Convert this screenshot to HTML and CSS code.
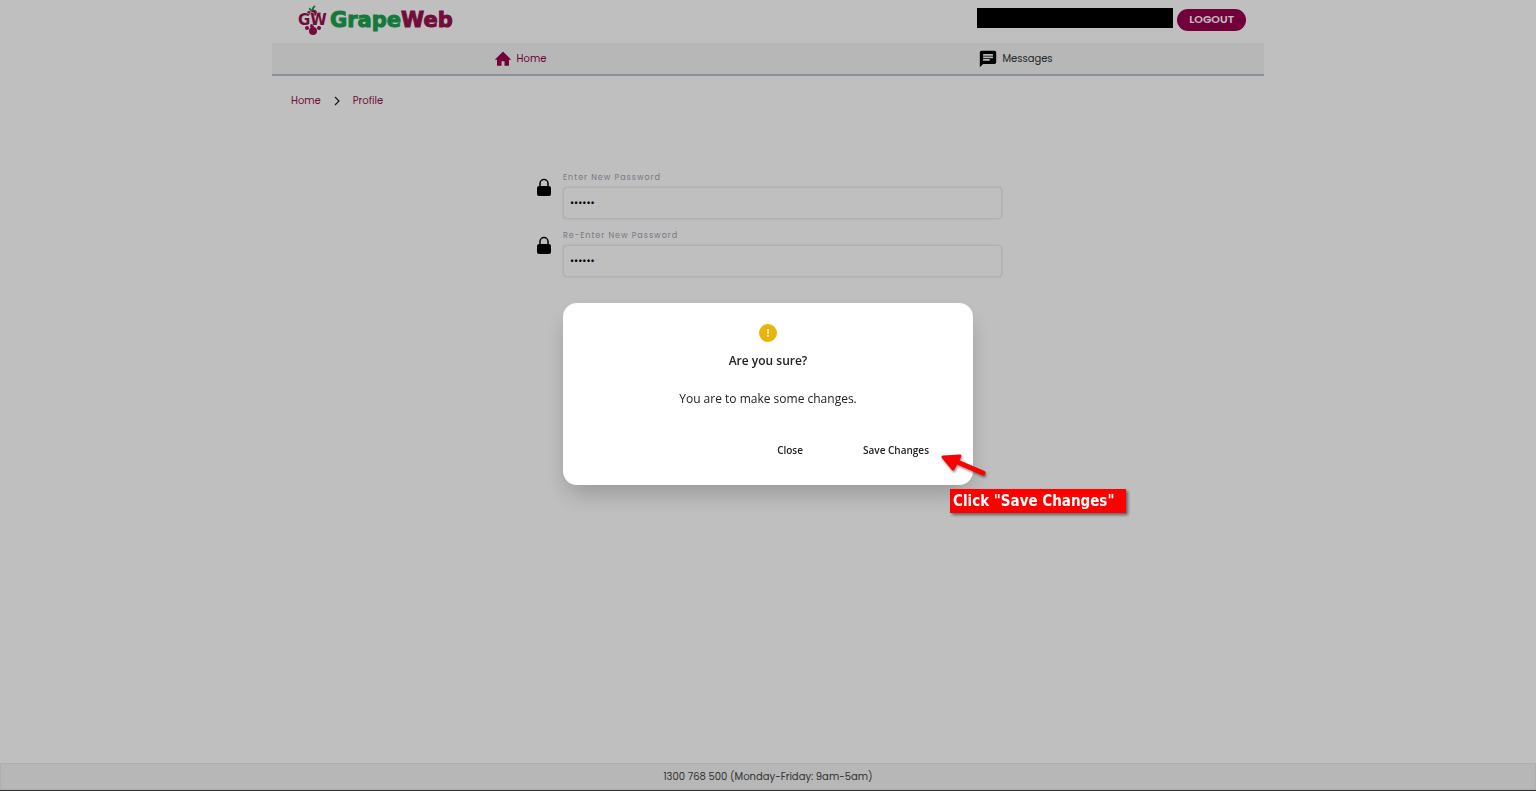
FILE: index.html
```
<!DOCTYPE html>
<html lang="en">
<head>
    <meta charset="UTF-8">
    <meta name="viewport" content="width=device-width, initial-scale=1.0">
    <title>GrapeWeb - Profile</title>
    <link rel="stylesheet" href="styles.css">
</head>
<body>
    <div class="page">
        <div class="container">
            <header class="header">
                <a href="#" class="logo">
                    <svg class="logo-mark" viewBox="0 0 30 32" width="30" height="32">
                        <path d="M15 7 Q14 4 17 2 M15 7 Q11 6 12 4" fill="none" stroke="#1aa350" stroke-width="2"/>
                        <g fill="#98104e">
                            <circle cx="16" cy="9" r="3"/>
                            <circle cx="11" cy="9" r="2"/>
                            <circle cx="21" cy="10" r="2"/>
                            <circle cx="9" cy="24" r="2"/>
                            <circle cx="14" cy="22" r="2"/>
                            <circle cx="21" cy="24" r="2"/>
                            <circle cx="15" cy="27" r="4"/>
                            <text x="0" y="21" class="logo-initials">GW</text>
                        </g>
                    </svg>
                    <span class="logo-text">Grape<span class="logo-web">Web</span></span>
                </a>
                <div class="account">
                    <div class="account-name"></div>
                    <button type="button" class="btn-logout">LOGOUT</button>
                </div>
            </header>

            <!-- Main navigation -->
            <nav class="nav">
                <a href="#" class="nav-link active">
                    <svg viewBox="0 0 24 24" width="18" height="18" fill="currentColor"><path d="M10 21v-6h4v6h6v-8h3L12 2 1 13h3v8z"/></svg>
                    Home
                </a>
                <a href="#" class="nav-link">
                    <svg viewBox="1 1 22 22" width="18" height="18"><path fill="#000" d="M20 2H4c-1.100 0-2 .9-2 2v18l4-4h14c1.100 0 2-.9 2-2V4c0-1.100-.9-2-2-2zM6 9h12v2H6V9zm8 5H6v-2h8v2zm4-6H6V6h12v2z"/></svg>
                    Messages
                </a>
            </nav>

            <div class="breadcrumb">
                <a href="#">Home</a>
                <svg viewBox="0 0 8 10" width="8" height="10"><path d="M2 1l4 4-4 4" fill="none" stroke="#222" stroke-width="1.200"/></svg>
                <a href="#">Profile</a>
            </div>

            <form class="password-form">
                <div class="form-row">
                    <svg viewBox="0 0 20 20" width="20" height="20"><path d="M6 9V5.500a4 4 0 0 1 8 0V9" fill="none" stroke="#000" stroke-width="1.500"/><rect x="3" y="8" width="14" height="10" rx="2"/></svg>
                    <div class="form-group">
                        <label for="new-password">Enter New Password</label>
                        <input type="password" id="new-password" value="secret">
                    </div>
                </div>
                <div class="form-row">
                    <svg viewBox="0 0 20 20" width="20" height="20"><path d="M6 9V5.500a4 4 0 0 1 8 0V9" fill="none" stroke="#000" stroke-width="1.500"/><rect x="3" y="8" width="14" height="10" rx="2"/></svg>
                    <div class="form-group">
                        <label for="confirm-password">Re-Enter New Password</label>
                        <input type="password" id="confirm-password" value="secret">
                    </div>
                </div>
            </form>
        </div>

        <footer class="footer">1300 768 500 (Monday-Friday: 9am-5am)</footer>
    </div>

    <!-- Confirm dialog -->
    <div class="overlay">
        <div class="modal" role="dialog" aria-modal="true" aria-labelledby="modal-title">
            <svg class="modal-icon" viewBox="0 0 20 20" width="20" height="20">
                <circle cx="10" cy="10" r="9" fill="#eab308"/>
                <path d="M10 6v5M10 12v2" stroke="#fff" stroke-width="1.400"/>
            </svg>
            <h3 class="modal-title" id="modal-title">Are you sure?</h3>
            <p class="modal-text">You are to make some changes.</p>
            <div class="modal-actions">
                <button type="button" class="btn-modal">Close</button>
                <button type="button" class="btn-modal">Save Changes</button>
            </div>

            <div class="callout">
                <svg class="callout-arrow" viewBox="0 0 50 28" width="50" height="28">
                    <path d="M2 3 L19 2 L12 15 Z" fill="#f00" stroke="#f00" stroke-width="3" stroke-linejoin="round"/>
                    <path d="M14 7 L42 19" stroke="#f00" stroke-width="5" stroke-linecap="round"/>
                </svg>
                <div class="callout-text">Click "Save Changes"</div>
            </div>
        </div>
    </div>
</body>
</html>
```
FILE: styles.css
```
* {
    box-sizing: border-box;
}

body {
    margin: 0;
    font-family: Poppins, Inter, sans-serif;
    font-size: 10px;
    color: #444;
    background-color: #fff;
}

a {
    color: #98104e;
    text-decoration: none;
}

button {
    font-family: inherit;
    border: none;
    cursor: pointer;
}

.page {
    display: flex;
    flex-direction: column;
    min-height: 100vh;
    border-bottom: 1px solid #444;
}

.container {
    flex: 1;
    width: 100%;
    max-width: 992px;
    margin: 0 auto;
}

/* Header */
.header {
    display: flex;
    justify-content: space-between;
    align-items: center;
    height: 43px;
    padding: 0 18px 4px 26px;
}

.logo {
    display: flex;
    align-items: center;
    gap: 2px;
}

.logo-initials {
    font-family: "DejaVu Sans", sans-serif;
    font-size: 15px;
    font-weight: 700;
    stroke: #fff;
    stroke-width: 1px;
    paint-order: stroke;
}

.logo-text {
    font-family: "DejaVu Sans", sans-serif;
    font-size: 21px;
    font-weight: 700;
    line-height: 32px;
    color: #1aa350;
    -webkit-text-stroke: 1px;
}

.logo-web {
    color: #98104e;
}

.account {
    display: flex;
    align-items: center;
    gap: 4px;
}

.account-name {
    width: 196px;
    height: 20px;
    margin-bottom: 4px;
    background-color: #000;
}

.btn-logout {
    height: 22px;
    padding: 0 12px;
    border-radius: 11px;
    background-color: #98004e;
    color: #fff;
    font-size: 11px;
    font-weight: 600;
}

/* Navigation */
.nav {
    display: grid;
    grid-template-columns: 1fr 1fr;
    height: 33px;
    background-color: #f4f4f4;
    border-bottom: 2px solid #b9c2cf;
}

.nav-link {
    display: flex;
    justify-content: center;
    align-items: center;
    gap: 5px;
    color: #333;
}

.nav-link.active {
    color: #98004e;
}

.breadcrumb {
    display: flex;
    align-items: center;
    gap: 12px;
    height: 50px;
    padding: 0 19px;
}

/* Password form */
.password-form {
    width: 100%;
    max-width: 468px;
    margin: 45px auto 0;
}

.form-row {
    display: flex;
    gap: 9px;
    margin-bottom: 10px;
}

.form-row svg {
    margin-top: 7px;
}

.form-group {
    flex: 1;
}

.form-group label {
    display: block;
    margin-bottom: 2px;
    font-size: 8px;
    line-height: 14px;
    letter-spacing: 1px;
    color: #9ca3af;
}

.form-group input {
    display: block;
    width: 100%;
    height: 32px;
    padding: 0 6px;
    border: 1px solid #ececec;
    border-radius: 4px;
    box-shadow: 0 0 2px #ddd;
    background-color: #fff;
    font-family: inherit;
    font-size: 10px;
    color: #000;
}

.footer {
    height: 27px;
    border: 1px solid #e8e8e8;
    background-color: #f4f4f4;
    line-height: 25px;
    text-align: center;
}

/* Modal */
.overlay {
    position: fixed;
    inset: 0;
    display: flex;
    justify-content: center;
    align-items: center;
    padding-bottom: 4px;
    background-color: rgba(0, 0, 0, 0.25);
    font-family: "Segoe UI", "Open Sans", sans-serif;
}

.modal {
    position: relative;
    width: 410px;
    padding: 20px 24px 22px;
    border-radius: 14px;
    background-color: #fff;
    box-shadow: 0 12px 24px -4px rgba(0, 0, 0, 0.22);
    color: #222;
    text-align: center;
}

.modal-icon {
    display: block;
    margin: 0 auto;
}

.modal-title {
    margin: 8px 0 0;
    font-size: 12px;
    font-weight: 600;
    line-height: 20px;
}

.modal-text {
    margin: 18px 0 0;
    font-size: 12px;
    line-height: 20px;
}

.modal-actions {
    display: flex;
    justify-content: flex-end;
    gap: 20px;
    margin-top: 28px;
}

.btn-modal {
    height: 26px;
    padding: 0 20px;
    background-color: transparent;
    color: #222;
    font-size: 10px;
    font-weight: 600;
}

/* Hint next to the save button */
.callout {
    position: absolute;
    top: 151px;
    left: 378px;
}

.callout-arrow {
    display: block;
    filter: drop-shadow(1px 2px 1px rgba(0, 0, 0, 0.4));
}

.callout-text {
    margin: 7px 0 0 9px;
    padding: 0 12px 0 3px;
    background-color: #f00;
    box-shadow: 2px 2px 3px rgba(0, 0, 0, 0.5);
    color: #fff;
    font-family: Tahoma, "DejaVu Sans Condensed", sans-serif;
    font-size: 15px;
    font-weight: 700;
    line-height: 24px;
    white-space: nowrap;
}
```
